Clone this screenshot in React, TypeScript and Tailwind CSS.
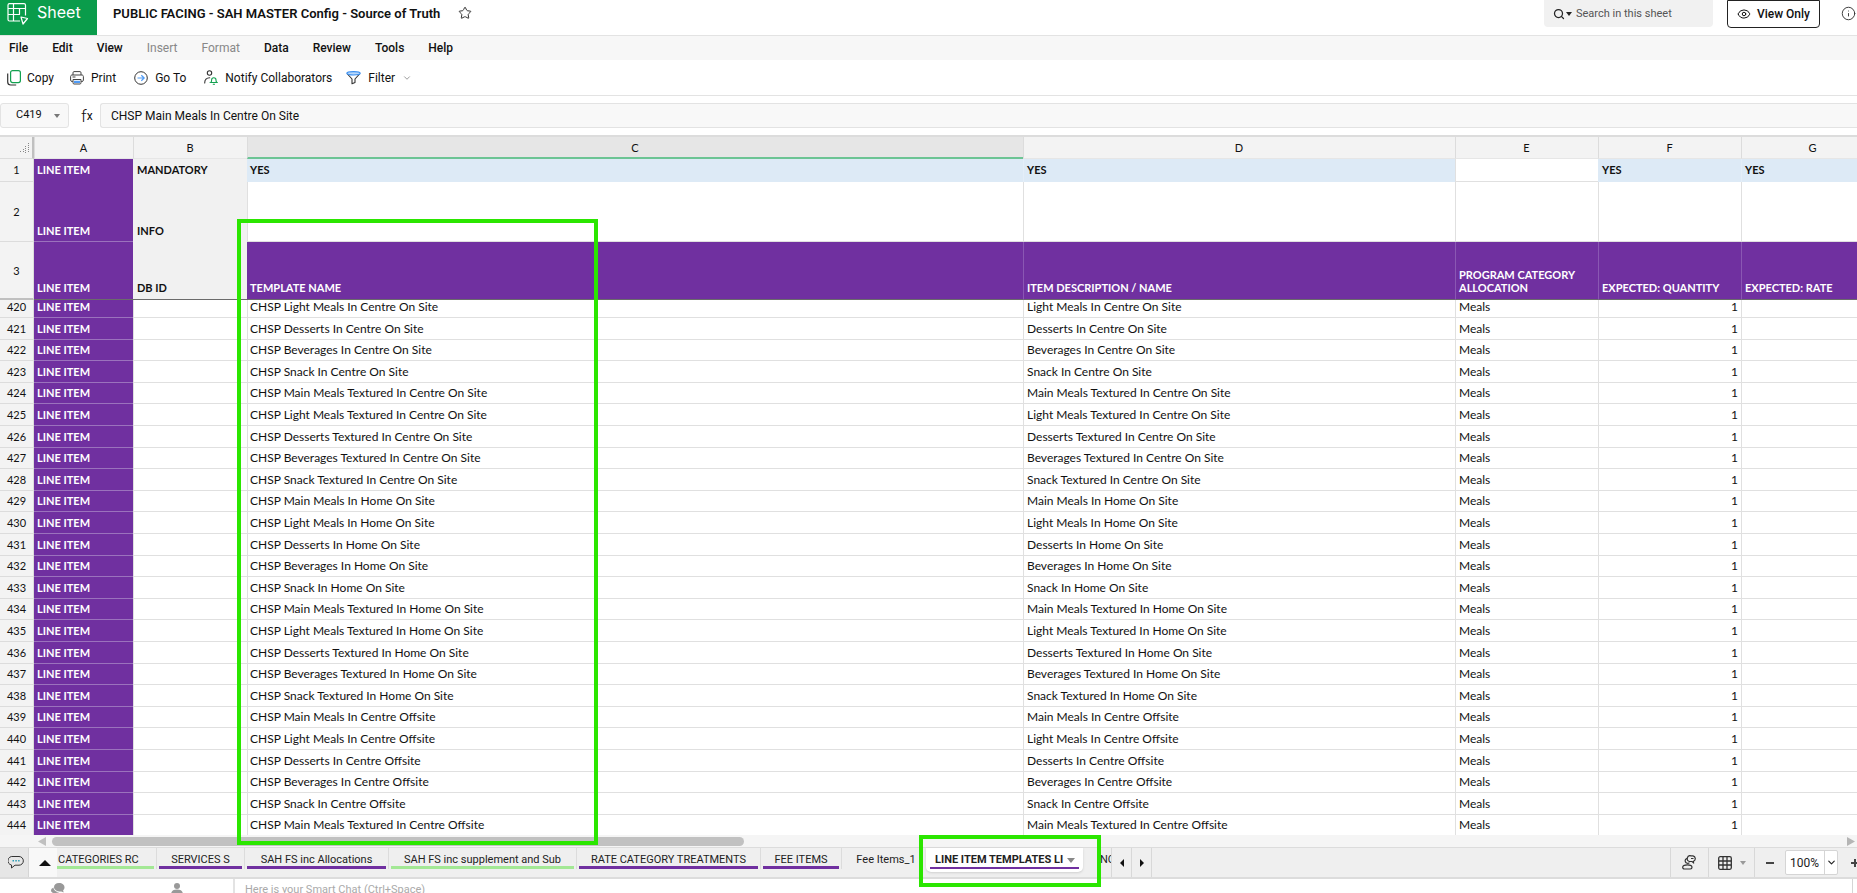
import clsx from 'clsx'
import { ChevronDown, Eye, Info, Search, Star } from 'lucide-react'

interface Row {
  id: number
  item: string
}

interface SheetTab {
  label: string
  width: string
  bar: string
}

const menus = [
  { label: 'File' },
  { label: 'Edit' },
  { label: 'View' },
  { label: 'Insert', disabled: true },
  { label: 'Format', disabled: true },
  { label: 'Data' },
  { label: 'Review' },
  { label: 'Tools' },
  { label: 'Help' },
]

const columns = [
  { name: 'A', width: 'w-[99px]' },
  { name: 'B', width: 'w-[114px]' },
  { name: 'C', width: 'w-[776px]' },
  { name: 'D', width: 'w-[432px]' },
  { name: 'E', width: 'w-[143px]' },
  { name: 'F', width: 'w-[143px]' },
  { name: 'G', width: 'w-[143px]' },
]

const items = [
  'Light Meals In Centre On Site',
  'Desserts In Centre On Site',
  'Beverages In Centre On Site',
  'Snack In Centre On Site',
  'Main Meals Textured In Centre On Site',
  'Light Meals Textured In Centre On Site',
  'Desserts Textured In Centre On Site',
  'Beverages Textured In Centre On Site',
  'Snack Textured In Centre On Site',
  'Main Meals In Home On Site',
  'Light Meals In Home On Site',
  'Desserts In Home On Site',
  'Beverages In Home On Site',
  'Snack In Home On Site',
  'Main Meals Textured In Home On Site',
  'Light Meals Textured In Home On Site',
  'Desserts Textured In Home On Site',
  'Beverages Textured In Home On Site',
  'Snack Textured In Home On Site',
  'Main Meals In Centre Offsite',
  'Light Meals In Centre Offsite',
  'Desserts In Centre Offsite',
  'Beverages In Centre Offsite',
  'Snack In Centre Offsite',
  'Main Meals Textured In Centre Offsite',
]

const rows: Row[] = items.map((item, i) => ({ id: 420 + i, item }))

const tabs: SheetTab[] = [
  { label: 'CATEGORIES RC', width: 'w-[100px]', bar: 'bg-[#a3e895]' },
  { label: 'SERVICES S', width: 'w-[88px]', bar: 'bg-[#7030a0]' },
  { label: 'SAH FS inc Allocations', width: 'w-[144px]', bar: 'bg-[#7030a0]' },
  { label: 'SAH FS inc supplement and Sub', width: 'w-[188px]', bar: 'bg-[#a3e895]' },
  { label: 'RATE CATEGORY TREATMENTS', width: 'w-[184px]', bar: 'bg-[#7030a0]' },
  { label: 'FEE ITEMS', width: 'w-[81px]', bar: 'bg-[#7030a0]' },
]

function SheetLogo() {
  return (
    <svg width="22" height="22" viewBox="0 0 22 22" fill="none" stroke="#fff" strokeWidth="1.2" strokeLinejoin="round">
      <path d="M13 18H2.5A1.5 1.5 0 0 1 1 16.5V2A1.5 1.5 0 0 1 2.5 .6H17A1.5 1.5 0 0 1 18.5 2v10.5" />
      <path d="M1 5.5h17.5M6.5 .6V18M1 11.5h12M12.5 5.5v6" />
      <path d="m14 14 6.500 1.500-4.500 5.500z" />
    </svg>
  )
}

function CopyIcon() {
  return (
    <svg width="14" height="16" viewBox="0 0 14 16" fill="none">
      <rect x="3.6" y=".6" width="9.8" height="12" rx="2" stroke="#12a150" strokeWidth="1.2" />
      <path d="M.7 3.5v8.5a3 3 0 0 0 3 3h5.5" stroke="#333" strokeWidth="1.2" />
    </svg>
  )
}

function PrintIcon() {
  return (
    <svg width="14" height="14" viewBox="0 0 14 14" fill="none" stroke="#444">
      <path d="M3 4V1.800C3 1 3.500.6 4 .6h6c.6 0 1 .4 1 1.200V4" />
      <path d="M2.800 10.500H2c-.8 0-1.400-.6-1.400-1.400V5.500C.6 4.700 1.200 4 2 4h10c.8 0 1.400.7 1.400 1.500v3.600c0 .8-.6 1.400-1.400 1.400h-.8" />
      <path d="M2.500 6h3" />
      <path d="M3 8.500h8v3.300c0 .8-.5 1.200-1 1.200H4c-.6 0-1-.4-1-1.200z" />
      <path d="M4 9.800h6v2.200H4z" fill="#4f9bf5" stroke="none" />
    </svg>
  )
}

function GoToIcon() {
  return (
    <svg width="14" height="14" viewBox="0 0 14 14" fill="none">
      <circle cx="7" cy="7" r="6.3" stroke="#333" />
      <path d="M3.500 7h6.500M7.300 4.200 10.200 7l-2.900 2.800" stroke="#4f9bf5" strokeWidth="1.2" />
    </svg>
  )
}

function NotifyIcon() {
  return (
    <svg width="14" height="15" viewBox="0 0 14 15" fill="none" strokeWidth="1.1" strokeLinecap="round">
      <circle cx="5.5" cy="3" r="2.2" stroke="#333" />
      <path d="M.7 13c0-3.200 1.800-5.200 5-5.200" stroke="#333" />
      <path d="M6.800 12.500c.9-.6.8-1.500.8-2.500 0-1.300.9-2.300 2.200-2.300S12 8.700 12 10c0 1-.1 1.900.9 2.500zM9.300 14.200h1.200" stroke="#12a150" />
    </svg>
  )
}

function FilterIcon() {
  return (
    <svg width="15" height="14" viewBox="0 0 15 14" fill="none" stroke="#333" strokeLinejoin="round">
      <path d="M1 2.500 6 8v4.800l3-1.300V8l5-5.500" strokeWidth="1.1" />
      <ellipse cx="7.5" cy="2.3" rx="6.7" ry="1.7" fill="#b8d8fb" stroke="#3b8ff0" strokeWidth="1.1" />
    </svg>
  )
}

function Caret({ className }: { className?: string }) {
  return (
    <svg width="6" height="4" viewBox="0 0 6 4" className={className} fill="currentColor">
      <path d="M0 0h6L3 4z" />
    </svg>
  )
}

const tools = [
  { label: 'Copy', icon: CopyIcon, space: 'gap-[6px] mr-4' },
  { label: 'Print', icon: PrintIcon, space: 'gap-[7px] mr-[18px]' },
  { label: 'Go To', icon: GoToIcon, space: 'gap-[7px] mr-[18px]' },
  { label: 'Notify Collaborators', icon: NotifyIcon, space: 'gap-[7px] mr-[14px]' },
]

function TitleBar() {
  return (
    <header className="flex h-9 shrink-0 items-start border-b border-[#e3e3e3]">
      <div className="flex h-[35px] w-[97px] items-start gap-2 bg-[#0a9c4b] pl-[7px] text-white">
        <span className="pt-[3px]"><SheetLogo /></span>
        <span className="font-['Inter',sans-serif] text-base leading-6">Sheet</span>
      </div>
      <h1 className="ml-4 text-[13px] font-semibold leading-[27px]">PUBLIC FACING - SAH MASTER Config - Source of Truth</h1>
      <button aria-label="Favourite" className="ml-[18px] mt-[6px]">
        <Star size={14} strokeWidth={1.7} className="text-[#333]" />
      </button>
      <div className="ml-auto flex items-start">
        <label className="mr-[14px] flex h-[27px] w-[169px] items-center rounded-b-[4px] bg-[#f1f1f1] pl-[9px]">
          <Search size={12} strokeWidth={2.5} className="text-[#222]" />
          <Caret className="ml-px text-[#222]" />
          <input placeholder="Search in this sheet" className="ml-1 w-[120px] bg-transparent pt-px text-[11px] outline-none placeholder:text-[#555]" />
        </label>
        <button className="mr-[21px] flex h-7 w-[93px] items-center justify-center gap-[6px] rounded-b-[4px] border border-[#222] text-[12px] font-medium">
          <Eye size={14} strokeWidth={1.7} />
          View Only
        </button>
        <button aria-label="Info" className="mr-px mt-[6px]">
          <Info size={15} strokeWidth={1.5} className="text-[#333]" />
        </button>
      </div>
    </header>
  )
}

function Toolbar() {
  return (
    <div className="flex h-9 shrink-0 items-center border-b border-[#e3e3e3] pl-[7px] text-[12px]">
      {tools.map(({ label, icon: Icon, space }) => (
        <button key={label} className={clsx('flex items-center whitespace-nowrap', space)}>
          <Icon />
          {label}
        </button>
      ))}
      <button className="flex items-center gap-[7px]">
        <FilterIcon />
        Filter
        <ChevronDown size={10} className="text-[#888]" />
      </button>
    </div>
  )
}

function FormulaBar() {
  return (
    <div className="flex h-[39px] shrink-0 items-center text-[12px]">
      <label className="flex h-[25px] w-[69px] items-center justify-between rounded-[3px] border border-[#e3e3e3] bg-[#f8f8f8] pl-[15px] pr-2">
        <input aria-label="Cell" defaultValue="C419" className="w-8 bg-transparent text-[11px] outline-none" />
        <Caret className="text-[#777]" />
      </label>
      <span className="flex w-[31px] items-end pl-3 leading-4"><i className="text-[17px] font-light not-italic">f</i>x</span>
      <input
        aria-label="Formula"
        defaultValue="CHSP Main Meals In Centre On Site"
        className="h-[25px] min-w-0 flex-1 rounded-l-[3px] border border-r-0 border-[#e3e3e3] bg-[#f8f8f8] pl-[10px] outline-none"
      />
    </div>
  )
}

const rowHead = 'border-r border-b border-[#dcdcdc] bg-[#f3f3f3] text-center text-[11px] font-normal'
const lineItem = 'border-b border-[#9b72bd] bg-[#7030a0] pl-[3px] text-[11px] font-bold text-white'
const label = 'border-b border-[#f1f1f1] bg-[#f1f1f1] pl-1 font-bold'
const blank = 'border-b border-l border-[#e0e0e0]'
const yes = 'border-l bg-[#ddeaf6] pb-[2px] font-bold'
const heading = 'border-b border-l border-b-[#6b6b6b] bg-[#7030a0] pb-[5px] font-bold leading-[13px] text-white'

function Grid() {
  return (
    <div className="min-h-0 flex-1 overflow-hidden border-t-2 border-[#dcdcdc] font-['Lato',sans-serif]">
      <table className="w-[1884px] table-fixed border-separate border-spacing-0 text-left text-[11px] leading-[13px]">
        <colgroup>
          <col className="w-[34px]" />
          {columns.map((c) => <col key={c.name} className={c.width} />)}
        </colgroup>
        <thead>
          <tr className="h-[22px]">
            <th aria-label="Select all" className="border-b border-r-2 border-b-[#dcdcdc] border-r-[#c0c0c0] bg-[#f3f3f3] pl-5">
              <svg width="10" height="10" viewBox="0 0 10 10" fill="#888">
                <path d="M8 0h1v1H8zM8 2h1v1H8zM5 3h1v1H5zM8 4h1v1H8zM5 5h1v1H5zM3 6h1v1H3zM8 6h1v1H8zM5 7h1v1H5zM3 8h1v1H3zM0 8h1v1H0zM8 8h1v1H8zM5 9h1v1H5z" />
              </svg>
            </th>
            {columns.map((c) => (
              <th
                key={c.name}
                className={clsx(
                  'border-l border-l-[#dcdcdc] pr-px text-center font-normal',
                  c.name === 'C' ? 'border-b-2 border-b-[#6cc494] bg-[#e6e6e6]' : 'border-b border-b-[#e6e6e6] bg-[#f3f3f3]',
                )}
              >
                {c.name}
              </th>
            ))}
          </tr>
        </thead>
        <tbody>
          <tr className="h-[23px]">
            <th className={clsx(rowHead, 'pb-[2px]')}>1</th>
            <td className="bg-[#7030a0] pb-[2px] pl-[3px] font-bold text-white">LINE ITEM</td>
            <td className="bg-[#f1f1f1] pb-[2px] pl-1 font-bold">MANDATORY</td>
            <td className={clsx(yes, 'border-[#ddeaf6] pl-[2px]')}>YES</td>
            <td className={clsx(yes, 'border-[#e4eef8] pl-[3px]')}>YES</td>
            <td className={blank} />
            <td className={clsx(yes, 'border-[#ddeaf6] pl-[3px]')}>YES</td>
            <td className={clsx(yes, 'border-[#e4eef8] pl-[3px]')}>YES</td>
          </tr>
          <tr className="h-[60px]">
            <th className={rowHead}>2</th>
            <td className={clsx(lineItem, 'pb-1 align-bottom')}>LINE ITEM</td>
            <td className={clsx(label, 'pb-1 align-bottom')}>INFO</td>
            {columns.slice(2).map((c) => <td key={c.name} className={blank} />)}
          </tr>
          <tr className="h-[58px] align-bottom">
            <th className="border-b-2 border-r border-b-[#c0c0c0] border-r-[#dcdcdc] bg-[#f3f3f3] text-center align-middle font-normal">3</th>
            <td className="border-b border-[#6b6b6b] bg-[#7030a0] pb-[5px] pl-[3px] font-bold text-white">LINE ITEM</td>
            <td className="border-b border-[#6b6b6b] bg-[#f1f1f1] pb-[5px] pl-1 font-bold">DB ID</td>
            <td className={clsx(heading, 'border-l-[#7030a0] pl-[2px]')}>TEMPLATE NAME</td>
            <td className={clsx(heading, 'border-l-[#8a57b3] pl-[3px]')}>ITEM DESCRIPTION / NAME</td>
            <td className={clsx(heading, 'border-l-[#8a57b3] pl-[3px]')}>PROGRAM CATEGORY ALLOCATION</td>
            <td className={clsx(heading, 'border-l-[#8a57b3] pl-[3px]')}>EXPECTED: QUANTITY</td>
            <td className={clsx(heading, 'border-l-[#8a57b3] pl-[3px]')}>EXPECTED: RATE</td>
          </tr>
          {rows.map((r, i) => {
            // row 420 is partly scrolled under the frozen rows
            const lift = i === 0 ? 'pb-1' : 'pb-px'
            return (
              <tr key={r.id} className={clsx('text-[12px]', i === 0 ? 'h-[18px]' : i % 5 === 2 || i % 5 === 4 ? 'h-[21px]' : 'h-[22px]')}>
                <th className={clsx(rowHead, lift)}>{r.id}</th>
                <td className={clsx(lineItem, lift)}>LINE ITEM</td>
                <td className={blank} />
                <td className={clsx(blank, lift, 'pl-[2px]')}>CHSP {r.item}</td>
                <td className={clsx(blank, lift, 'pl-[3px]')}>{r.item}</td>
                <td className={clsx(blank, lift, 'pl-[3px]')}>Meals</td>
                <td className={clsx(blank, lift, 'pr-[3px] text-right')}>1</td>
                <td className={blank} />
              </tr>
            )
          })}
        </tbody>
      </table>
    </div>
  )
}

function ScrollTrack() {
  return (
    <div className="flex h-3 shrink-0 items-center bg-[#f5f5f5] pl-[38px] pr-[2px]">
      <svg width="8" height="9" viewBox="0 0 8 9" fill="#c0c0c0"><path d="M8 0v9L0 4.500z" /></svg>
      <div className="ml-[6px] h-[9px] w-[692px] rounded-full bg-[#c1c1c1]" />
      <svg width="8" height="9" viewBox="0 0 8 9" fill="#b5b5b5" className="ml-auto"><path d="M0 0v9l8-4.500z" /></svg>
    </div>
  )
}

function TabBar() {
  return (
    <footer className="flex h-8 shrink-0 border-b-2 border-t border-b-[#dcdcdc] border-t-[#dcdcdc] bg-[#efefef] text-[11px] text-[#222]">
      <button aria-label="Comments" className="flex w-[29px] items-center justify-center border-r border-[#d5d5d5] bg-[#e6e6e6] pl-1">
        <svg width="16" height="15" viewBox="0 0 16 15" fill="none" stroke="#333">
          <path d="M5 1.500h6a4.200 4.200 0 0 1 0 8.700H7L3.500 13v-3A4.300 4.300 0 0 1 5 1.500z" strokeLinejoin="round" />
          <path d="M4.500 5.800H6M7.300 5.800h1.500M10.100 5.800h1.500" stroke="#2a9db5" strokeWidth="1.5" />
        </svg>
      </button>
      <button aria-label="All sheets" className="flex w-7 items-center justify-center bg-[#f8f8f8] pl-1">
        <svg width="12" height="6" viewBox="0 0 12 6" fill="#111"><path d="M6 0l6 6H0z" /></svg>
      </button>
      {tabs.map((t, i) => (
        <button key={t.label} className={clsx('flex h-[21px] flex-col border-r border-[#dcdcdc] pr-[2px]', t.width, i > 0 && 'pl-[2px]')}>
          <span className={clsx('h-[18px] w-full whitespace-nowrap pt-[2px] leading-5', i === 0 ? 'pl-px text-left' : 'text-center')}>{t.label}</span>
          <span className={clsx('h-[3px] w-full shrink-0', t.bar)} />
        </button>
      ))}
      <button className="h-[21px] w-[84px] pl-1 text-center leading-6">Fee Items_1</button>
      <button className="relative flex h-6 w-[157px] flex-col rounded-b-[5px] bg-white px-1 text-left font-bold shadow-sm">
        <span className="flex h-[18px] items-center gap-1 whitespace-nowrap pl-[5px] pt-[6px] leading-[18px]">
          LINE ITEM TEMPLATES LI
          <svg width="8" height="5" viewBox="0 0 8 5" fill="#888"><path d="M0 0h8L4 5z" /></svg>
        </span>
        <span className="mt-px h-[2px] w-full bg-[#7030a0]" />
        <span className="absolute -left-[7px] -top-[13px] h-[52px] w-[182px] border-4 border-[#2be600]" />
      </button>
      <span className="w-[28px] overflow-hidden pl-[14px] leading-6">INC</span>
      <button aria-label="Previous sheet" className="flex w-5 items-center justify-center border-l border-[#d8d8d8]">
        <svg width="4" height="8" viewBox="0 0 4 8" fill="#111"><path d="M4 0v8L0 4z" /></svg>
      </button>
      <button aria-label="Next sheet" className="flex w-[21px] items-center justify-center border-x border-[#d8d8d8]">
        <svg width="4" height="8" viewBox="0 0 4 8" fill="#111"><path d="M0 0v8l4-4z" /></svg>
      </button>
      <div className="ml-auto flex">
        <button aria-label="Collaborators" className="flex w-[38px] items-center justify-center border-l border-[#d8d8d8]">
          <svg width="15" height="15" viewBox="0 0 15 15" fill="none" stroke="#333" strokeWidth="1.2">
            <path d="M7.300 6.500H10l1.500 1.300V6.300A2.900 2.900 0 0 0 11 .8H9A2.900 2.900 0 0 0 7.300 6.500z" />
            <path d="M5.600 3.300a2.500 2.500 0 1 0 1.800 4.300M9 3.500h2.500" />
            <path d="M5.500 9.800c2.700 0 4.500 1 4.500 2.500 0 1-.7 1.700-1.700 1.700H2.400C1.400 14 .7 13.300.7 12.300c0-1.500 2-2.500 4.800-2.500z" />
          </svg>
        </button>
        <button aria-label="Grid view" className="flex w-[46px] items-center justify-center gap-2 border-l border-[#d8d8d8]">
          <svg width="14" height="14" viewBox="0 0 14 14" fill="none" stroke="#333" strokeWidth="1.3">
            <rect x=".7" y=".7" width="12.6" height="12.6" rx="1.5" />
            <path d="M5 .7V5H.7M9 .7V5h4.300M5 13.300V9H.7M9 13.300V9h4.300M5 5h4v4H5z" />
          </svg>
          <Caret className="text-[#999]" />
        </button>
        <button aria-label="Zoom out" className="flex w-[31px] items-center justify-center border-l border-[#d8d8d8]">
          <svg width="8" height="2" viewBox="0 0 8 2" fill="#444"><path d="M0 0h8v2H0z" /></svg>
        </button>
        <div className="mt-[2px] flex h-[25px] w-[53px] rounded-[2px] border border-[#d5d5d5] bg-white">
          <select aria-label="Zoom" className="w-[39px] appearance-none border-r border-[#d5d5d5] pl-1 text-[12px]">
            <option>100%</option>
          </select>
          <span className="flex flex-1 items-center justify-center"><ChevronDown size={11} strokeWidth={2.5} /></span>
        </div>
        <button aria-label="Zoom in" className="flex w-[19px] items-center justify-end overflow-hidden">
          <svg width="6" height="8" viewBox="0 0 6 8" fill="#444"><path d="M0 3h3V0h2v3h1v2H5v3H3V5H0z" /></svg>
        </button>
      </div>
    </footer>
  )
}

function ChatStrip() {
  return (
    <div className="flex h-[14px] shrink-0 overflow-hidden text-[#999]">
      <div className="flex w-[235px] border-r-2 border-[#e3e3e3] pt-1">
        <svg width="14" height="12" viewBox="0 0 14 12" fill="currentColor" className="ml-[51px]">
          <path d="M8 0c3.300 0 5.500 1.900 5.500 4.300 0 1.200-.5 2.300-1.400 3l.6 2.200-2.400-1C7.500 8.900 3 7.500 3 4.300 3 1.900 4.800 0 8 0z" />
          <path d="M2.500 4.500C.8 5.300 0 6.300 0 7.500c0 2 2.500 3 5 2.500 2 0 3-1 3-1-3 0-5.500-2-5.500-4.500z" />
        </svg>
        <svg width="12" height="12" viewBox="0 0 12 12" fill="currentColor" className="ml-[106px]">
          <circle cx="6" cy="3" r="3" />
          <path d="M0 12c0-4 2-5.500 6-5.500s6 1.500 6 5.500z" />
        </svg>
      </div>
      <input aria-label="Smart Chat" placeholder="Here is your Smart Chat (Ctrl+Space)" className="mt-1 h-[15px] min-w-0 flex-1 pl-[10px] text-[11px] placeholder:text-[#aaa]" />
      <span className="mr-1 w-px bg-[#d5d5d5]" />
    </div>
  )
}

export default function App() {
  return (
    <div className="relative flex h-screen flex-col overflow-hidden bg-white font-['Roboto',sans-serif] text-[#111]">
      <TitleBar />
      <nav className="flex h-6 shrink-0 items-center gap-6 bg-[#f7f7f7] pl-[9px] text-[12px] font-medium">
        {menus.map((m) => (
          <button key={m.label} disabled={m.disabled} className={m.disabled ? 'font-normal text-[#888]' : ''}>{m.label}</button>
        ))}
      </nav>
      <Toolbar />
      <FormulaBar />
      <Grid />
      <ScrollTrack />
      <TabBar />
      <ChatStrip />
      {/* marker around the template name column */}
      <div className="pointer-events-none absolute left-[237px] top-[219px] bottom-[48px] w-[361px] border-4 border-[#2be600]" />
    </div>
  )
}
